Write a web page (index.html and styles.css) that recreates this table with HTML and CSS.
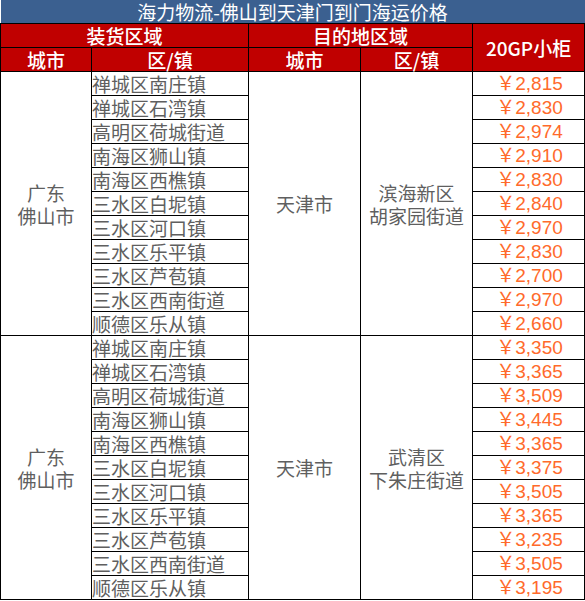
FILE: index.html
```html
<!DOCTYPE html>
<html lang="zh-CN">
<head>
<meta charset="utf-8">
<title>海力物流-佛山到天津门到门海运价格</title>
<link rel="stylesheet" href="styles.css">
</head>
<body>
<table class="price-table">
  <colgroup>
    <col class="c-city"><col class="c-town"><col class="c-dcity"><col class="c-dtown"><col class="c-price">
  </colgroup>
  <thead>
    <tr class="title-row"><th colspan="5" class="title">海力物流-佛山到天津门到门海运价格</th></tr>
    <tr class="head-row">
      <th colspan="2">装货区域</th>
      <th colspan="2">目的地区域</th>
      <th rowspan="2">20GP小柜</th>
    </tr>
    <tr class="head-row">
      <th>城市</th><th>区/镇</th><th>城市</th><th>区/镇</th>
    </tr>
  </thead>
  <tbody>
    <tr><td rowspan="11" class="center">广东<br>佛山市</td><td class="town">禅城区南庄镇</td><td rowspan="11" class="center">天津市</td><td rowspan="11" class="center">滨海新区<br>胡家园街道</td><td class="price">￥2,815</td></tr>
    <tr><td class="town">禅城区石湾镇</td><td class="price">￥2,830</td></tr>
    <tr><td class="town">高明区荷城街道</td><td class="price">￥2,974</td></tr>
    <tr><td class="town">南海区狮山镇</td><td class="price">￥2,910</td></tr>
    <tr><td class="town">南海区西樵镇</td><td class="price">￥2,830</td></tr>
    <tr><td class="town">三水区白坭镇</td><td class="price">￥2,840</td></tr>
    <tr><td class="town">三水区河口镇</td><td class="price">￥2,970</td></tr>
    <tr><td class="town">三水区乐平镇</td><td class="price">￥2,830</td></tr>
    <tr><td class="town">三水区芦苞镇</td><td class="price">￥2,700</td></tr>
    <tr><td class="town">三水区西南街道</td><td class="price">￥2,970</td></tr>
    <tr><td class="town">顺德区乐从镇</td><td class="price">￥2,660</td></tr>
    <tr><td rowspan="11" class="center">广东<br>佛山市</td><td class="town">禅城区南庄镇</td><td rowspan="11" class="center">天津市</td><td rowspan="11" class="center">武清区<br>下朱庄街道</td><td class="price">￥3,350</td></tr>
    <tr><td class="town">禅城区石湾镇</td><td class="price">￥3,365</td></tr>
    <tr><td class="town">高明区荷城街道</td><td class="price">￥3,509</td></tr>
    <tr><td class="town">南海区狮山镇</td><td class="price">￥3,445</td></tr>
    <tr><td class="town">南海区西樵镇</td><td class="price">￥3,365</td></tr>
    <tr><td class="town">三水区白坭镇</td><td class="price">￥3,375</td></tr>
    <tr><td class="town">三水区河口镇</td><td class="price">￥3,505</td></tr>
    <tr><td class="town">三水区乐平镇</td><td class="price">￥3,365</td></tr>
    <tr><td class="town">三水区芦苞镇</td><td class="price">￥3,235</td></tr>
    <tr><td class="town">三水区西南街道</td><td class="price">￥3,505</td></tr>
    <tr><td class="town">顺德区乐从镇</td><td class="price">￥3,195</td></tr>
  </tbody>
</table>
</body>
</html>
```
FILE: styles.css
```css
html, body {
  margin: 0;
  padding: 0;
  background: #ffffff;
}
.price-table {
  border-collapse: collapse;
  table-layout: fixed;
  width: 584px;
  font-family: "Noto Sans CJK SC", "Noto Sans", sans-serif;
  font-size: 19px;
}
.c-city { width: 91px; }
.c-town { width: 157px; }
.c-dcity { width: 112px; }
.c-dtown { width: 112px; }
.c-price { width: 112px; }
.price-table th,
.price-table td {
  border: 1px solid #000;
  padding: 0;
  line-height: 23px;
  height: 23px;
  white-space: nowrap;
}
.title-row .title {
  background: #3b6090;
  color: #ffffff;
  font-weight: normal;
  font-size: 19px;
  border-top: none;
  border-left: none;
  border-right: none;
  text-align: center;
}
.head-row th {
  background: #c00000;
  color: #ffffff;
  font-weight: 500;
  font-size: 19px;
  text-align: center;
}
.price-table td {
  color: #5f5f5f;
}
.town {
  text-align: left;
  padding-left: 4px;
}
.center {
  text-align: center;
}
.price-table td.price {
  text-align: center;
  color: #ff6a2b;
  font-family: "Liberation Sans", "Noto Sans CJK SC", sans-serif;
  font-size: 19px;
  padding-left: 2px;
}
```
